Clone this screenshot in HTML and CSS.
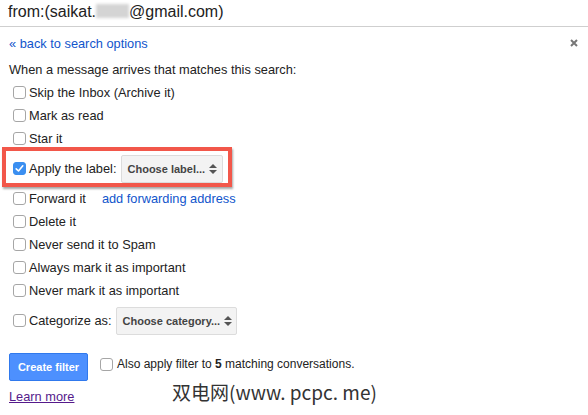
FILE: index.html
```html
<!DOCTYPE html>
<html>
<head>
<meta charset="utf-8">
<link rel="stylesheet" href="styles.css">
</head>
<body>
<div class="page">
  <div class="header">from:(saikat.<span class="blur"></span>@gmail.com)</div>
  <div class="content">
    <div class="toprow">
      <a class="link">« back to search options</a>
      <svg class="close" width="8" height="8" viewBox="0 0 8 8"><path d="M1 1 L7 7 M7 1 L1 7" stroke="#777" stroke-width="2" fill="none"/></svg>
    </div>
    <div class="intro">When a message arrives that matches this search:</div>
    <div class="row"><span class="cb"></span>Skip the Inbox (Archive it)</div>
    <div class="row"><span class="cb"></span>Mark as read</div>
    <div class="row"><span class="cb"></span>Star it</div>
    <div class="row tall highlight"><span class="cb checked"><svg width="13" height="13" viewBox="0 0 13 13"><path d="M3.2 6.8 L5.5 9 L9.8 3.8" stroke="#fff" stroke-width="1.6" fill="none" stroke-linecap="round" stroke-linejoin="round"/></svg></span>Apply the label:<span class="select label-select">Choose label...<span class="arrows"><i class="up"></i><i class="down"></i></span></span></div>
    <div class="row"><span class="cb"></span>Forward it<a class="link fwd">add forwarding address</a></div>
    <div class="row"><span class="cb"></span>Delete it</div>
    <div class="row"><span class="cb"></span>Never send it to Spam</div>
    <div class="row"><span class="cb"></span>Always mark it as important</div>
    <div class="row"><span class="cb"></span>Never mark it as important</div>
    <div class="row tall"><span class="cb"></span>Categorize as:<span class="select cat-select">Choose category...<span class="arrows"><i class="up"></i><i class="down"></i></span></span></div>
    <div class="footer">
      <button class="create">Create filter</button>
      <div class="also"><span class="cb"></span><span>Also apply filter to <b>5</b> matching conversations.</span></div>
    </div>
    <a class="learn">Learn more</a>
  </div>
  <div class="watermark">双电网(www. pcpc. me)</div>
</div>
</body>
</html>
```

FILE: styles.css
```css
html, body {
  margin: 0;
  padding: 0;
  background: #fff;
}
body {
  font-family: "Liberation Sans", Arial, sans-serif;
  font-size: 12.8px;
  color: #222;
}
.page {
  position: relative;
  width: 588px;
  height: 415px;
  overflow: hidden;
}
.header {
  height: 26px;
  line-height: 24px;
  font-size: 16px;
  padding-left: 8px;
  border-bottom: 1px solid #cfcfcf;
  color: #222;
  white-space: nowrap;
}
.blur {
  display: inline-block;
  width: 33px;
  height: 14px;
  vertical-align: -1px;
  background: #d4d4d4;
  filter: blur(1.5px);
}
.content {
  padding: 5px 0 0 9px;
}
.toprow {
  height: 23px;
  display: flex;
  align-items: center;
  justify-content: space-between;
  padding-right: 10px;
}
.link {
  color: #15c;
  text-decoration: none;
}
.close {
  display: block;
  margin-top: -2px;
}
.intro {
  height: 23px;
  line-height: 23px;
  margin-top: 3px;
}
.row {
  height: 23px;
  display: flex;
  align-items: center;
  padding-left: 4px;
  white-space: nowrap;
}
.row.tall {
  height: 37px;
}
.highlight {
  position: relative;
}
.highlight::before {
  content: "";
  position: absolute;
  left: -7px;
  top: -3px;
  width: 222px;
  height: 32px;
  border: 4px solid #f2574a;
  box-shadow: 1px 2px 2px rgba(0,0,0,0.35);
}
.cb {
  display: inline-block;
  box-sizing: border-box;
  width: 13px;
  height: 13px;
  border: 1px solid #a6a6a6;
  border-radius: 3px;
  background: #fff;
  margin-right: 3px;
  flex: none;
}
.cb.checked {
  border-color: #3a8ff0;
  background: #3b8ff1;
  position: relative;
}
.cb.checked svg {
  position: absolute;
  left: -1px;
  top: -1px;
}
.select {
  display: inline-flex;
  align-items: center;
  box-sizing: border-box;
  height: 28px;
  background: #f3f3f3;
  border: 1px solid #dcdcdc;
  border-radius: 2px;
  font-size: 11px;
  font-weight: bold;
  color: #444;
  padding-left: 6px;
}
.label-select {
  width: 102px;
  margin-left: 4px;
}
.cat-select {
  width: 121px;
  margin-left: 4px;
}
.arrows {
  display: inline-flex;
  flex-direction: column;
  gap: 2px;
  margin-left: 4px;
}
.arrows i {
  display: block;
  width: 0;
  height: 0;
  border-left: 4px solid transparent;
  border-right: 4px solid transparent;
}
.arrows .up {
  border-bottom: 4px solid #555;
}
.arrows .down {
  border-top: 4px solid #555;
}
.fwd {
  margin-left: 16px;
}
.footer {
  display: flex;
  align-items: flex-start;
  margin-top: 14px;
}
.create {
  width: 79px;
  height: 28px;
  border: 1px solid #3079ed;
  border-radius: 2px;
  background: #4d90fe;
  color: #fff;
  font-family: "Liberation Sans", Arial, sans-serif;
  font-size: 11px;
  font-weight: bold;
  padding: 0;
}
.also {
  display: flex;
  align-items: center;
  margin-left: 12px;
  margin-top: 3px;
  height: 16px;
  font-size: 12px;
  white-space: nowrap;
}
.also .cb {
  margin-right: 4px;
}
.learn {
  display: block;
  margin-top: 8px;
  color: #551a8b;
  text-decoration: underline;
  width: max-content;
}
.watermark {
  position: absolute;
  left: 172px;
  top: 378px;
  font-family: "Noto Sans CJK SC", sans-serif;
  font-size: 19px;
  color: #333;
  white-space: nowrap;
  text-shadow: 0 0 2px #fff, 0 0 2px #fff;
}
```
